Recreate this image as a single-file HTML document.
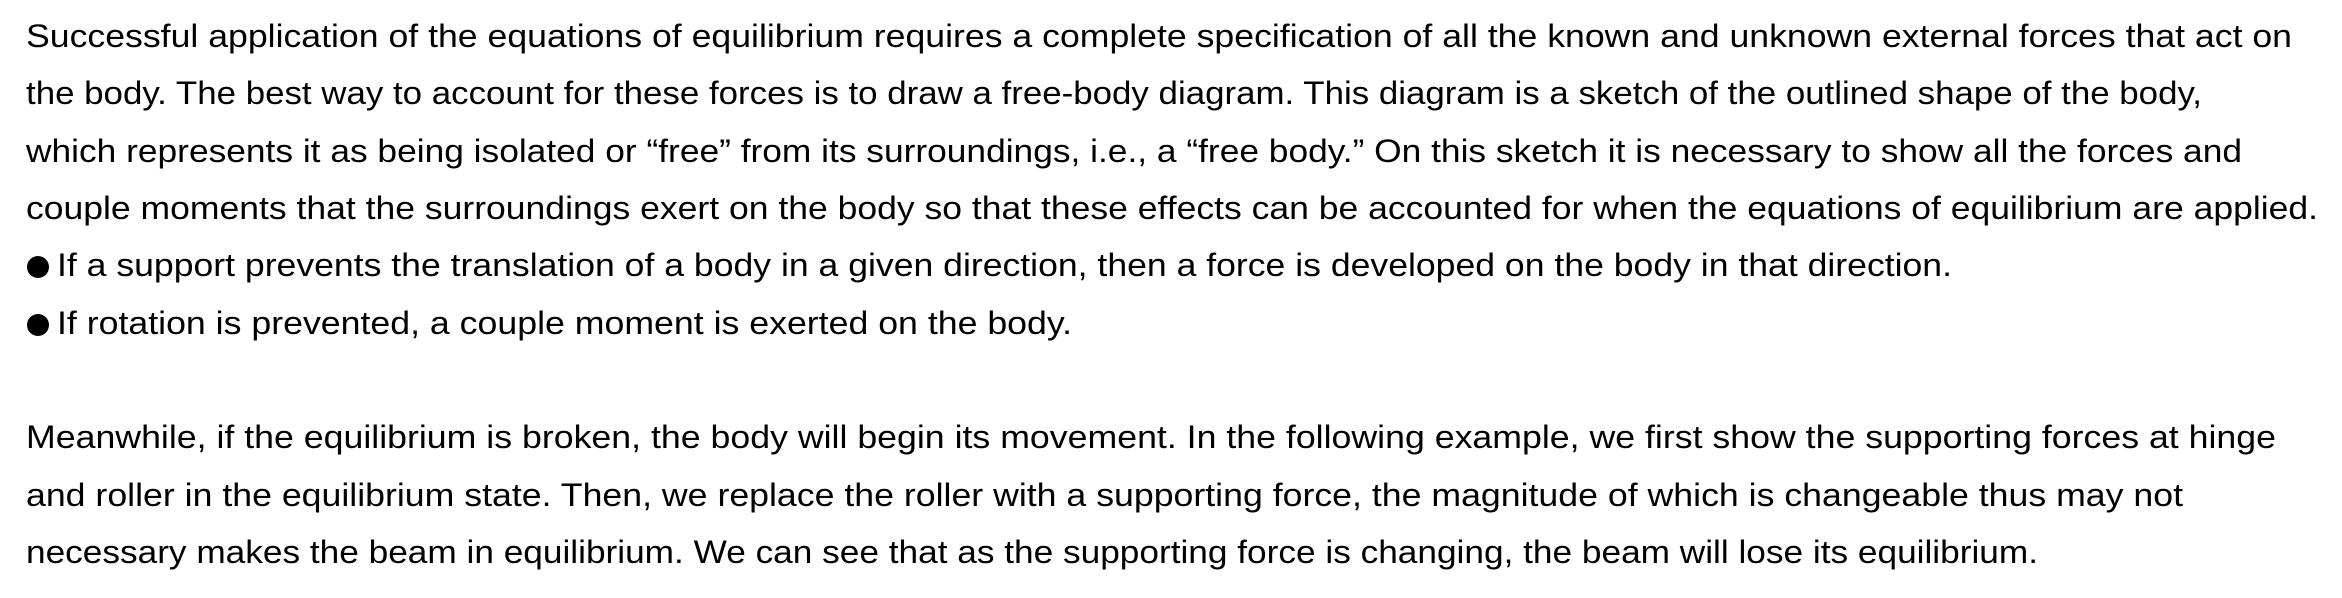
<!DOCTYPE html>
<html><head><meta charset="utf-8"><style>
html,body{margin:0;padding:0;background:#fff;width:2342px;height:598px;overflow:hidden}
svg text{font-family:"Liberation Sans",sans-serif;font-size:32.5px;fill:#000}
</style></head><body>
<svg width="2342" height="598" xmlns="http://www.w3.org/2000/svg">
<text x="26" y="47" textLength="2266" lengthAdjust="spacingAndGlyphs">Successful application of the equations of equilibrium requires a complete specification of all the known and unknown external forces that act on</text>
<text x="26" y="104" textLength="2176" lengthAdjust="spacingAndGlyphs">the body. The best way to account for these forces is to draw a free-body diagram. This diagram is a sketch of the outlined shape of the body,</text>
<text x="26" y="162" textLength="2216" lengthAdjust="spacingAndGlyphs">which represents it as being isolated or “free” from its surroundings, i.e., a “free body.” On this sketch it is necessary to show all the forces and</text>
<text x="26" y="219" textLength="2292" lengthAdjust="spacingAndGlyphs">couple moments that the surroundings exert on the body so that these effects can be accounted for when the equations of equilibrium are applied.</text>
<circle cx="38" cy="267" r="11" fill="#000"/>
<text x="57" y="276" textLength="1895" lengthAdjust="spacingAndGlyphs">If a support prevents the translation of a body in a given direction, then a force is developed on the body in that direction.</text>
<circle cx="38" cy="325" r="11" fill="#000"/>
<text x="57" y="334" textLength="1015" lengthAdjust="spacingAndGlyphs">If rotation is prevented, a couple moment is exerted on the body.</text>
<text x="26" y="448" textLength="2250" lengthAdjust="spacingAndGlyphs">Meanwhile, if the equilibrium is broken, the body will begin its movement. In the following example, we first show the supporting forces at hinge</text>
<text x="26" y="506" textLength="2157" lengthAdjust="spacingAndGlyphs">and roller in the equilibrium state. Then, we replace the roller with a supporting force, the magnitude of which is changeable thus may not</text>
<text x="26" y="563" textLength="2012" lengthAdjust="spacingAndGlyphs">necessary makes the beam in equilibrium. We can see that as the supporting force is changing, the beam will lose its equilibrium.</text>
</svg>
</body></html>
